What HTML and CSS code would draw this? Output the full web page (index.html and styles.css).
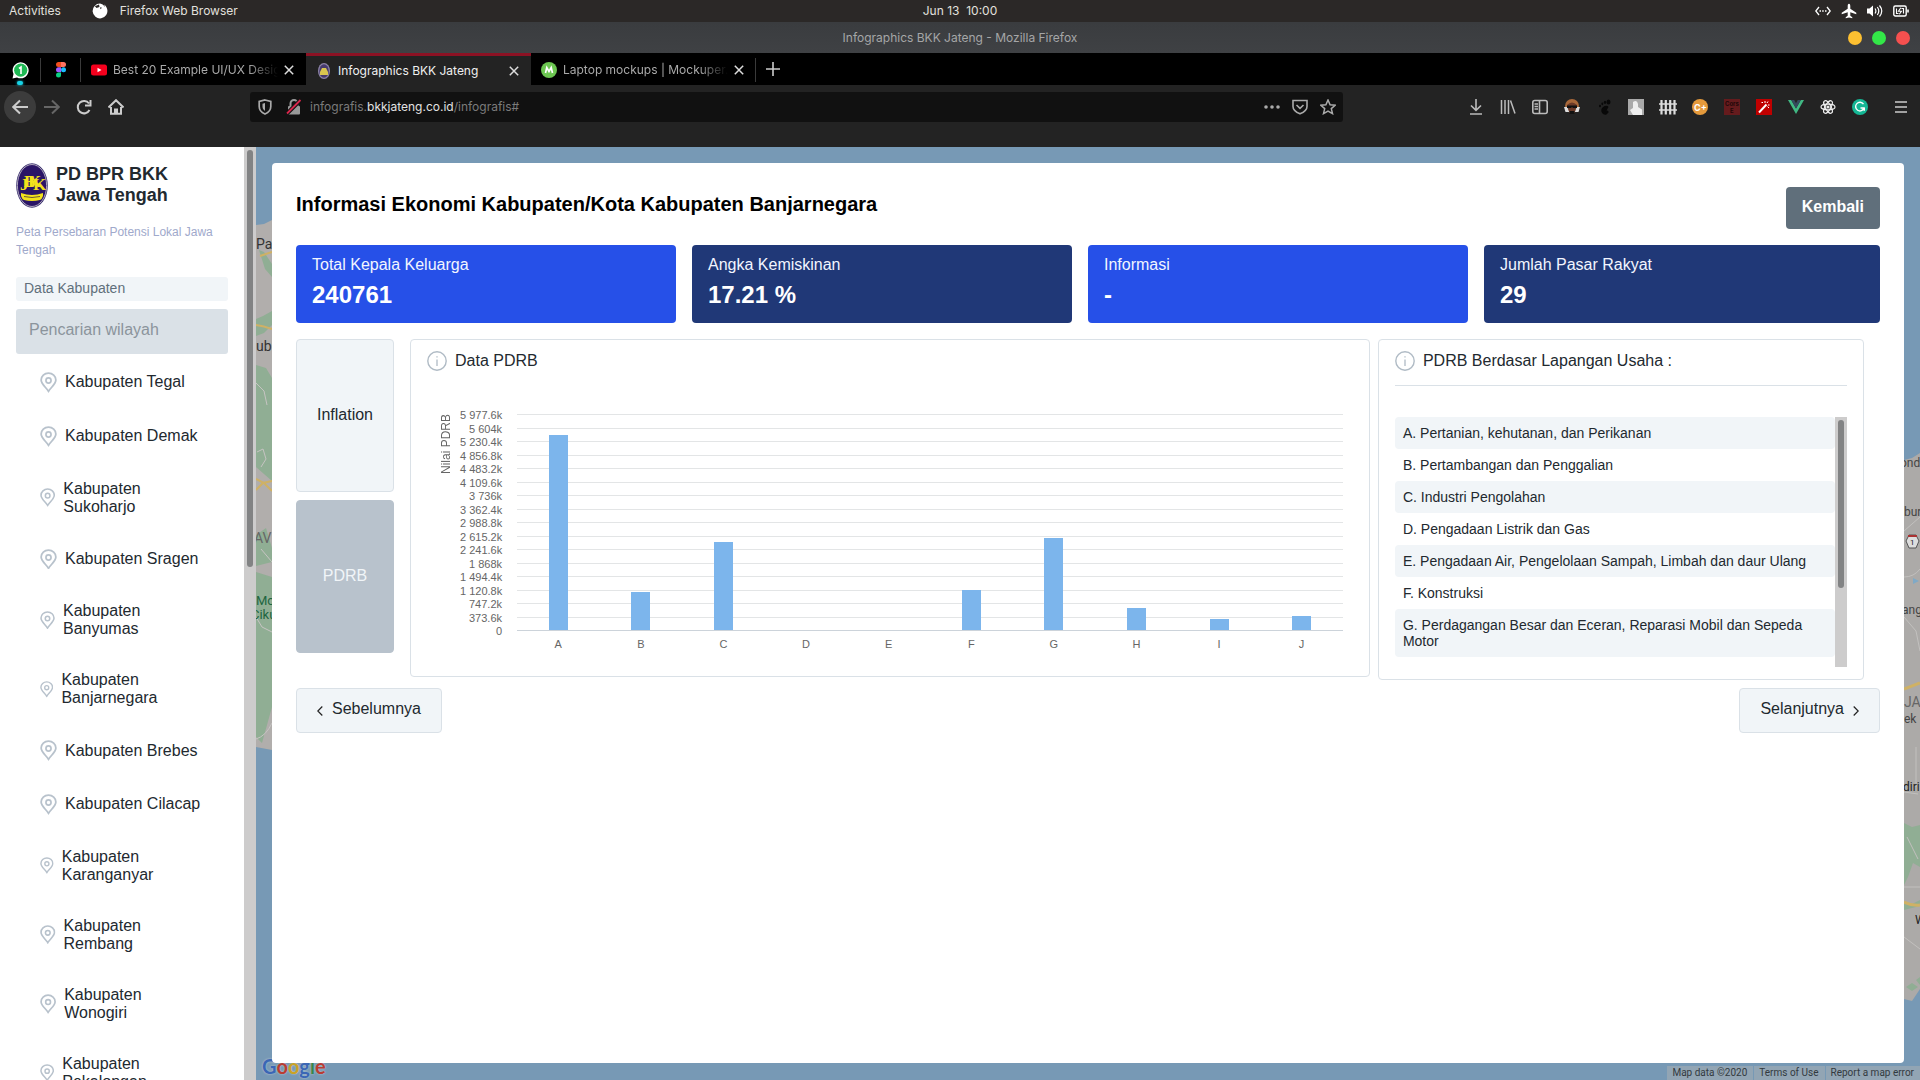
FILE: index.html
```html
<!DOCTYPE html>
<html lang="id">
<head>
<meta charset="utf-8">
<meta name="viewport" content="width=device-width, initial-scale=1">
<title>Infographics BKK Jateng</title>
<link rel="stylesheet" href="styles.css">
</head>
<body>
<svg class="defs" aria-hidden="true">
  <symbol id="pin" viewBox="0 0 18 22"><path d="M9 20.5C6.800 16.500 1.200 13 1.200 8.500a7.800 7.300 0 0 1 15.600 0C16.800 13 11.200 16.500 9 20.500z" fill="none" stroke="#b8c2cc" stroke-width="1.900"/><circle cx="9" cy="9" r="2.700" fill="none" stroke="#b8c2cc" stroke-width="1.800"/></symbol>
  <symbol id="info" viewBox="0 0 20 20"><circle cx="10" cy="10" r="9.200" fill="none" stroke="#b0bbc5" stroke-width="1.400"/><path d="M10 8.500v6.500M10 5.200v1.300" stroke="#b0bbc5" stroke-width="1.300"/></symbol>
  <symbol id="close" viewBox="0 0 10 10"><path d="M.8.8l8.400 8.400M9.200.8L.8 9.200" stroke="currentColor" stroke-width="1.500"/></symbol>
  <symbol id="logo" viewBox="0 0 32 45"><ellipse cx="16" cy="22.500" rx="15.800" ry="22.200" fill="#3b3170"/><ellipse cx="16" cy="22.500" rx="14.600" ry="21" fill="#2a1566" stroke="#bcb4c4" stroke-width=".9"/><text x="4 8 12 17" y="27 24 24 27" font-size="17" fill="#f2e21c" font-family="Liberation Serif, serif" font-weight="bold">JBKK</text><path d="M5 30q11 4 22 0v3q-1 3-3 4-8 2-16 0-2-1-3-4z" fill="#f2e21c"/><path d="M8 33.500q8 2 16 0" fill="none" stroke="#6b5a35"/></symbol>
</svg>

<header class="system">
  <button class="system__item" type="button">Activities</button>
  <button class="system__item" type="button">
    <svg width="16" height="16" viewBox="0 0 16 16"><path d="M8 .6a7.400 7.400 0 1 0 7.200 5.600C14.700 4.200 13.500 2.500 12 1.600c.7 1 .8 1.700.8 2.400C11.500 2 10 1 8 .6z" fill="#fff"/><path d="M1 1l2.500 2L7 1.500 7.500 4l-3 1zM8 4.200l2 .6-1.500 1.400z" fill="#2b2826"/></svg>
    Firefox Web Browser</button>
  <time class="system__clock">Jun 13&nbsp; 10:00</time>
  <div class="system__tray">
    <svg width="16" height="16" viewBox="0 0 16 16" fill="none" stroke="#fff" stroke-width="1.300"><path d="M4 4L.8 8 4 12M12 4l3.200 4L12 12M4.500 8h1.500M7.200 8h1.500M10 8h1.500"/></svg>
    <svg width="16" height="16" viewBox="0 0 16 16" fill="#fff"><path d="M8 .8c1 0 1.300 1.200 1.300 2.500v2.500l6 4v1.500l-6-2v3.500l2 1.500v1L8 14.500l-3.300.8v-1l2-1.500V9.300l-6 2V9.800l6-4V3.300C6.700 2 7 .8 8 .8z"/></svg>
    <svg width="16" height="16" viewBox="0 0 16 16"><path d="M0 5.500h2.500L6 2.500v11L2.500 10.500H0z" fill="#fff"/><path d="M8 5.500q1.800 2.500 0 5M10.300 4q3 4 0 8M12.500 2.500q4.500 5.500 0 11" fill="none" stroke="#fff" stroke-width="1.200"/></svg>
    <svg width="16" height="16" viewBox="0 0 16 16" fill="none" stroke="#fff"><rect x=".8" y="3" width="12.400" height="10" rx="1.500" stroke-width="1.400"/><path d="M15 6.500v3" stroke-width="1.600"/><path d="M3.500 5.500v5h2M10.500 10.500v-5h-2M7.800 4.800L5.500 8.200h3L6.300 11.300" stroke-width="1.100"/></svg>
  </div>
</header>

<div class="titlebar">
  <span>Infographics BKK Jateng - Mozilla Firefox</span>
  <div class="titlebar__buttons">
    <button class="dot dot--min" type="button" aria-label="Minimize"></button>
    <button class="dot dot--max" type="button" aria-label="Maximize"></button>
    <button class="dot dot--close" type="button" aria-label="Close"></button>
  </div>
</div>

<nav class="tabs" aria-label="Tabs">
  <a class="tab tab--pinned tab--notice" href="#" aria-label="WhatsApp">
    <svg width="17" height="17" viewBox="0 0 17 17"><path d="M.5 16.500l1-4.500A8 8 0 1 1 5 15.500z" fill="#fff"/><circle cx="8.700" cy="8.200" r="6.600" fill="#1fb954"/><path d="M7 6.500l2-1.500v7" fill="none" stroke="#fff" stroke-width="1.600"/></svg>
  </a>
  <a class="tab tab--pinned" href="#" aria-label="Figma">
    <svg width="12" height="16" viewBox="0 0 12 16"><path d="M3.500 0H6v5H3.500a2.500 2.500 0 0 1 0-5z" fill="#f24e1e"/><path d="M6 0h2.500a2.500 2.500 0 0 1 0 5H6z" fill="#ff7262"/><path d="M3.500 5.300H6v5H3.500a2.500 2.500 0 0 1 0-5z" fill="#a259ff"/><circle cx="8.500" cy="7.800" r="2.500" fill="#1abcfe"/><path d="M3.500 10.600H6v2.500a2.500 2.500 0 1 1-2.500-2.500z" fill="#0acf83"/></svg>
  </a>
  <a class="tab" href="#">
    <svg width="16" height="16" viewBox="0 0 16 16"><rect y="2.500" width="16" height="11" rx="2.500" fill="#f5001d"/><path d="M6.500 5.700v4.600l4-2.300z" fill="#fff"/></svg>
    <span class="tab__title tab__title--fade">Best 20 Example UI/UX Desig</span>
    <svg class="tab__close" width="10" height="10"><use href="#close"/></svg>
  </a>
  <a class="tab tab--active" href="#" aria-current="page">
    <svg width="12" height="16" viewBox="0 0 12 16"><ellipse cx="6" cy="8" rx="6" ry="8" fill="#8d84a8"/><ellipse cx="6" cy="8" rx="4.800" ry="6.800" fill="#463a6c"/><path d="M2 9l2-4h4l2 4v3H2z" fill="#d9c64f"/></svg>
    <span class="tab__title">Infographics BKK Jateng</span>
    <svg class="tab__close" width="10" height="10"><use href="#close"/></svg>
  </a>
  <a class="tab" href="#">
    <svg width="16" height="16" viewBox="0 0 16 16"><circle cx="8" cy="8" r="8" fill="#6cc651"/><path d="M4.500 11L5.800 5.500 8 9.500l2.200-4L11.500 11" fill="none" stroke="#fff" stroke-width="1.700"/></svg>
    <span class="tab__title tab__title--fade">Laptop mockups | Mockuper.r</span>
    <svg class="tab__close" width="10" height="10"><use href="#close"/></svg>
  </a>
  <button class="tabs__new" type="button" aria-label="New tab"><svg width="14" height="14" viewBox="0 0 14 14"><path d="M7 0v14M0 7h14" stroke="#ccc" stroke-width="1.600"/></svg></button>
</nav>

<div class="toolbar">
  <div class="toolbar__nav">
    <button class="nav-btn nav-btn--back" type="button" aria-label="Back"><svg width="16" height="16" viewBox="0 0 16 16"><path d="M16 8H1M8 1.500L1.300 8 8 14.500"/></svg></button>
    <button class="nav-btn nav-btn--off" type="button" aria-label="Forward"><svg width="16" height="16" viewBox="0 0 16 16"><path d="M0 8h15M8 1.500L14.700 8 8 14.500"/></svg></button>
    <button class="nav-btn" type="button" aria-label="Reload"><svg width="16" height="16" viewBox="0 0 16 16"><path d="M13.500 11A6.200 6.200 0 1 1 13 4.500M14.500 1v5.500H9"/></svg></button>
    <button class="nav-btn" type="button" aria-label="Home"><svg width="16" height="16" viewBox="0 0 16 16"><path d="M.5 8.500L8 1.200l7.500 7.300M3 8v6.800h10V8M7 14.500v-4h2v4"/></svg></button>
  </div>
  <div class="urlbar">
    <svg width="14" height="16" viewBox="0 0 14 16" fill="none" stroke="#aaa" stroke-width="1.700"><path d="M7 1l5.800 1.500v5C12.800 11 10.500 13.500 7 15 3.500 13.500 1.200 11 1.200 7.500v-5z"/><path d="M7 4v8q-2.500-1.500-2.500-4V4.700z" fill="#aaa" stroke="none"/></svg>
    <svg width="16" height="16" viewBox="0 0 16 16"><path d="M4.500 7V4.500a3.500 3.500 0 0 1 7 0V7" fill="none" stroke="#999" stroke-width="2"/><rect x="2" y="7" width="12" height="8.500" rx="1" fill="#999"/><path d="M1 14.500L14.500 1" stroke="#111" stroke-width="4"/><path d="M1 14.500L14.500 1" stroke="#d7264b" stroke-width="1.800"/></svg>
    <a class="urlbar__text" href="#">infografis.<b>bkkjateng.co.id</b>/infografis#</a>
    <svg width="16" height="16" viewBox="0 0 16 16" fill="#aaa"><circle cx="2" cy="8" r="1.800"/><circle cx="8" cy="8" r="1.800"/><circle cx="14" cy="8" r="1.800"/></svg>
    <svg width="16" height="16" viewBox="0 0 16 16" fill="none" stroke="#aaa" stroke-width="1.600"><path d="M1 1.500h14v6q0 4.500-7 7.300-7-2.800-7-7.300z"/><path d="M4.500 6L8 9.300 11.500 6"/></svg>
    <svg width="16" height="16" viewBox="0 0 16 16" fill="none" stroke="#aaa" stroke-width="1.500"><path d="M8 1l2.100 4.700 5.100.5-3.900 3.400 1.200 5L8 12l-4.500 2.600 1.200-5L.8 6.200l5.100-.5z"/></svg>
  </div>
  <div class="toolbar__ext">
    <svg width="16" height="16" viewBox="0 0 16 16" fill="none" stroke="#bbb" stroke-width="1.600"><path d="M8 0v11M3 6.500L8 11.300l5-4.800M2 15h12"/></svg>
    <svg width="16" height="16" viewBox="0 0 16 16" fill="none" stroke="#bbb" stroke-width="1.500"><path d="M1.500 1v14M5 1v14M8.500 1v14M10.500 1.500l4.500 13"/></svg>
    <svg width="16" height="16" viewBox="0 0 16 16" fill="none" stroke="#bbb" stroke-width="1.600"><rect x=".8" y="1.500" width="14.400" height="13" rx="2"/><path d="M7.500 2v12M2.500 5h3.500M2.500 7.500h3.500M2.500 10h3.500"/></svg>
    <svg width="16" height="16" viewBox="0 0 16 16"><circle cx="8" cy="7" r="7" fill="#a8683a"/><path d="M0 8h16l-1.500 5h-13z" fill="#ddd"/><path d="M3 6q5-5 10 0l-1 4q-1 4-4 5-3-1-4-5z" fill="#6b3a28"/><path d="M3 6.500h10v2.500H9L8 8 7 9H3zM5.500 12h5v3h-5z" fill="#111"/></svg>
    <svg width="16" height="16" viewBox="0 0 16 16" fill="#080808"><ellipse cx="12.500" cy="3" rx="2" ry="2.600"/><ellipse cx="9" cy="3.300" rx="1.200" ry="1.600"/><ellipse cx="6.300" cy="4.800" rx="1" ry="1.400"/><ellipse cx="4" cy="7" rx="1" ry="1.300"/><path d="M12.500 8q-1-2-4-1-4 2-3 6 1.500 3.500 5 2.500l2-2q.5-2-2-2z"/></svg>
    <svg width="16" height="16" viewBox="0 0 16 16"><rect width="16" height="16" fill="#a9a9a9"/><path d="M5 3q4-3 5 2v3l4 2.500V16H5l-3-5 3-2z" fill="#eee"/></svg>
    <svg width="18" height="16" viewBox="0 0 18 16" fill="none" stroke="#ddd"><path d="M2.500 1v14.500M6.800 1v14.500M11.200 1v14.500M15.500 1v14.500" stroke-width="2.200"/><path d="M0 5h18M0 11h18" stroke-width="1.400"/></svg>
    <svg width="16" height="16" viewBox="0 0 16 16"><circle cx="8" cy="8" r="8" fill="#e59a3c"/><text x="2" y="11.500" font-size="9" font-weight="bold" fill="#fff" font-family="Inter, sans-serif">C+</text></svg>
    <svg width="16" height="16" viewBox="0 0 16 16"><rect width="16" height="16" fill="#651b1d"/><g fill="#1e0809" font-family="Inter, sans-serif" font-size="6" font-weight="bold"><text x="1" y="7">Cors</text><text x="6" y="14">E</text></g></svg>
    <svg width="16" height="16" viewBox="0 0 16 16"><rect width="16" height="16" fill="#c00000"/><path d="M3 13.500L10.500 5.500" stroke="#fff" stroke-width="2"/><path d="M9 2v2M12 2.500l-1 1.500M13.500 6h-1.500M13 9l-1.500-1.500M5.500 3.500h1.500" stroke="#fff"/></svg>
    <svg width="16" height="16" viewBox="0 0 16 16"><path d="M0 1h3.200L8 9.500 12.800 1H16L8 15z" fill="#41b883"/><path d="M3.200 1h3L8 4.200 9.800 1h3L8 9.500z" fill="#35495e"/></svg>
    <svg width="16" height="16" viewBox="0 0 16 16" fill="none" stroke="#eee" stroke-width="1.200"><ellipse cx="8" cy="8" rx="7" ry="2.800"/><ellipse cx="8" cy="8" rx="7" ry="2.800" transform="rotate(60 8 8)"/><ellipse cx="8" cy="8" rx="7" ry="2.800" transform="rotate(120 8 8)"/><circle cx="8" cy="8" r="1" fill="#eee"/></svg>
    <svg width="16" height="16" viewBox="0 0 16 16"><circle cx="8" cy="8" r="8" fill="#15b795"/><path d="M11.500 5.200A4.300 4.300 0 1 0 12 9H8.500M12.300 9v2.800" fill="none" stroke="#fff" stroke-width="1.400"/></svg>
    <button class="menu-btn" type="button" aria-label="Menu"><svg width="12" height="14" viewBox="0 0 12 14"><path d="M0 2h12M0 7h12M0 12h12" stroke="#ccc" stroke-width="1.700"/></svg></button>
  </div>
</div>

<div class="app">
  <aside class="sidebar">
    <div class="sidebar__body">
      <div class="brand">
        <svg width="32" height="45"><use href="#logo"/></svg>
        <h1 class="brand__name">PD BPR BKK<br>Jawa Tengah</h1>
      </div>
      <p class="sidebar__note">Peta Persebaran Potensi Lokal Jawa Tengah</p>
      <label class="sidebar__label" for="search">Data Kabupaten</label>
      <input class="sidebar__search" id="search" type="text" placeholder="Pencarian wilayah">
      <ul class="regions">
        <li><a class="region" href="#"><svg class="region__pin" viewBox="0 0 18 22"><use href="#pin"/></svg><span>Kabupaten Tegal</span></a></li>
        <li><a class="region" href="#"><svg class="region__pin" viewBox="0 0 18 22"><use href="#pin"/></svg><span>Kabupaten Demak</span></a></li>
        <li><a class="region" href="#"><svg class="region__pin" viewBox="0 0 18 22"><use href="#pin"/></svg><span>Kabupaten Sukoharjo</span></a></li>
        <li><a class="region" href="#"><svg class="region__pin" viewBox="0 0 18 22"><use href="#pin"/></svg><span>Kabupaten Sragen</span></a></li>
        <li><a class="region" href="#"><svg class="region__pin" viewBox="0 0 18 22"><use href="#pin"/></svg><span>Kabupaten Banyumas</span></a></li>
        <li><a class="region" href="#"><svg class="region__pin" viewBox="0 0 18 22"><use href="#pin"/></svg><span>Kabupaten Banjarnegara</span></a></li>
        <li><a class="region" href="#"><svg class="region__pin" viewBox="0 0 18 22"><use href="#pin"/></svg><span>Kabupaten Brebes</span></a></li>
        <li><a class="region" href="#"><svg class="region__pin" viewBox="0 0 18 22"><use href="#pin"/></svg><span>Kabupaten Cilacap</span></a></li>
        <li><a class="region" href="#"><svg class="region__pin" viewBox="0 0 18 22"><use href="#pin"/></svg><span>Kabupaten Karanganyar</span></a></li>
        <li><a class="region" href="#"><svg class="region__pin" viewBox="0 0 18 22"><use href="#pin"/></svg><span>Kabupaten Rembang</span></a></li>
        <li><a class="region" href="#"><svg class="region__pin" viewBox="0 0 18 22"><use href="#pin"/></svg><span>Kabupaten Wonogiri</span></a></li>
        <li><a class="region" href="#"><svg class="region__pin" viewBox="0 0 18 22"><use href="#pin"/></svg><span>Kabupaten Pekalongan</span></a></li>
      </ul>
    </div>
    <div class="scrollbar"><div class="scrollbar__thumb" style="height: 45%"></div></div>
  </aside>

  <main class="map">
    <svg class="map__edge map__edge--left" width="16" height="933" viewBox="0 0 16 933" font-family="Roboto, sans-serif">
      <path d="M0 78L8 77 16 73V603L0 600z" fill="#b1aeac"/>
      <g fill="#90ae94"><path d="M3 103l5 2 8 12v13l-7-8zM0 172l7-3 9-5v14l-8 8-8 3zM0 218l10 3 6 10v42l-16 18zM0 277q10-4 16-5v62l-16-14zM0 388l10-7 6 20v14l-16 4zM0 425l16 5v130L6 596 0 590z"/></g>
      <g fill="none" stroke="#c6c4c2"><path d="M0 236l8 8 3 14M1 305l6-3 3 10-5 8M0 470l6 10 10 5M0 592q10-3 16-16M5 402l11 13"/></g>
      <g fill="none" stroke="#cfb165" stroke-width="2"><path d="M4 109l12-4M0 178q8 1 16 4M0 343l7-7 9-2M0 332l8 4 8 8"/></g>
      <g font-size="14" fill="#333"><text x="0" y="102">Pa</text><text x="0" y="204">ub</text></g>
      <text x="-2" y="396" font-size="14" fill="#666">AV</text>
      <g font-size="13" fill="#20653f"><text x="0" y="458">Mc</text><text x="-5" y="472">Ciku</text></g>
    </svg>
    <svg class="map__edge map__edge--right" width="16" height="933" viewBox="0 0 16 933" font-family="Roboto, sans-serif">
      <path d="M0 313l8-2 8-5v536l-8 12-8-2z" fill="#acaaa8"/>
      <g fill="#90ae94"><path d="M0 676l8 4 8-2v42l-7-4-5 14-4 8zM2 840l6-4 6 4-6 4zM12 833l4-3v8zM0 755l8 2 8-4v6l-16 4z"/></g>
      <g fill="none" stroke="#c2c0be"><path d="M0 384l16-14M0 430q10 0 16-8M0 470l12 14 4 20M0 645l14 2M12 600v40M0 740h16M3 690l11 22M0 790l16 12"/></g>
      <g fill="none" stroke="#cfb165" stroke-width="3"><path d="M0 542l16-6M0 755q8 4 16 3"/></g>
      <path d="M9 431l6 3-6 3z" fill="#7fa9c6"/>
      <g font-size="12" fill="#444"><text x="-4" y="320">ond</text><text x="0" y="369">bur</text><text x="-2" y="467">ang</text><text x="0" y="576">ek</text></g>
      <path d="M2 394l3-6h7l3 6-3 7H5z" fill="#ddd" stroke="#555"/><path d="M4 389h9" stroke="#a33" stroke-width="2"/><text x="6" y="398" font-size="8" fill="#222">1</text>
      <text x="0" y="560" font-size="14" fill="#666">JA</text>
      <text x="-1" y="644" font-size="12" fill="#222">diri</text><text x="11" y="777" font-size="12" fill="#222">W</text>
    </svg>
    <span class="map__google" aria-label="Google"><i class="g-b">G</i><i class="g-r">o</i><i class="g-y">o</i><i class="g-b">g</i><i class="g-g">l</i><i class="g-r">e</i></span>

    <section class="panel">
      <div class="panel__head">
        <h2 class="panel__title">Informasi Ekonomi Kabupaten/Kota Kabupaten Banjarnegara</h2>
        <button class="btn btn--back" type="button">Kembali</button>
      </div>

      <div class="stats">
        <div class="stat"><div class="stat__label">Total Kepala Keluarga</div><div class="stat__value">240761</div></div>
        <div class="stat stat--dark"><div class="stat__label">Angka Kemiskinan</div><div class="stat__value">17.21 %</div></div>
        <div class="stat"><div class="stat__label">Informasi</div><div class="stat__value">-</div></div>
        <div class="stat stat--dark"><div class="stat__label">Jumlah Pasar Rakyat</div><div class="stat__value">29</div></div>
      </div>

      <div class="detail">
        <div class="switch">
          <button class="switch__item" type="button">Inflation</button>
          <button class="switch__item switch__item--active" type="button">PDRB</button>
        </div>

        <section class="card card--chart">
          <h3 class="card__title"><svg width="20" height="20"><use href="#info"/></svg>Data PDRB</h3>
          <div class="chart">
            <div class="chart__axis-title">Nilai PDRB</div>
            <div class="chart__y">
              <span>5 977.6k</span><span>5 604k</span><span>5 230.4k</span><span>4 856.8k</span><span>4 483.2k</span><span>4 109.6k</span><span>3 736k</span><span>3 362.4k</span><span>2 988.8k</span><span>2 615.2k</span><span>2 241.6k</span><span>1 868k</span><span>1 494.4k</span><span>1 120.8k</span><span>747.2k</span><span>373.6k</span><span>0</span>
            </div>
            <div class="chart__plot">
              <div class="chart__grid"><i></i><i></i><i></i><i></i><i></i><i></i><i></i><i></i><i></i><i></i><i></i><i></i><i></i><i></i><i></i><i></i><i></i></div>
              <div class="chart__bars">
                <div class="bar" style="height: 195px"></div>
                <div class="bar" style="height: 38px"></div>
                <div class="bar" style="height: 88px"></div>
                <div class="bar" style="height: 0"></div>
                <div class="bar" style="height: 0"></div>
                <div class="bar" style="height: 40px"></div>
                <div class="bar" style="height: 92px"></div>
                <div class="bar" style="height: 22px"></div>
                <div class="bar" style="height: 11px"></div>
                <div class="bar" style="height: 14px"></div>
              </div>
            </div>
            <div class="chart__x"><span>A</span><span>B</span><span>C</span><span>D</span><span>E</span><span>F</span><span>G</span><span>H</span><span>I</span><span>J</span></div>
          </div>
        </section>

        <section class="card card--legend">
          <h3 class="card__title card__title--ruled"><svg width="20" height="20"><use href="#info"/></svg>PDRB Berdasar Lapangan Usaha :</h3>
          <div class="legend">
            <ul class="legend__list">
              <li>A. Pertanian, kehutanan, dan Perikanan</li>
              <li>B. Pertambangan dan Penggalian</li>
              <li>C. Industri Pengolahan</li>
              <li>D. Pengadaan Listrik dan Gas</li>
              <li>E. Pengadaan Air, Pengelolaan Sampah, Limbah dan daur Ulang</li>
              <li>F. Konstruksi</li>
              <li>G. Perdagangan Besar dan Eceran, Reparasi Mobil dan Sepeda Motor</li>
            </ul>
            <div class="scrollbar"><div class="scrollbar__thumb" style="height: 69%"></div></div>
          </div>
        </section>
      </div>

      <div class="pager">
        <button class="btn btn--page" type="button"><svg width="6" height="10" viewBox="0 0 6 10"><path d="M5.300.5L.8 5l4.500 4.500" fill="none" stroke="#222" stroke-width="1.200"/></svg>Sebelumnya</button>
        <button class="btn btn--page" type="button">Selanjutnya<svg width="6" height="10" viewBox="0 0 6 10"><path d="M.7.500L5.200 5 .7 9.500" fill="none" stroke="#222" stroke-width="1.200"/></svg></button>
      </div>
    </section>

    <footer class="map__terms"><span>Map data ©2020</span><a href="#">Terms of Use</a><a href="#">Report a map error</a></footer>
  </main>
</div>
</body>
</html>
```
FILE: styles.css
```css
*, *::before, *::after { box-sizing: border-box; }

body {
  margin: 0;
  height: 100vh;
  display: flex;
  flex-direction: column;
  overflow: hidden;
  background: #232323;
  color: #22292f;
  font-family: "Liberation Sans", Arial, sans-serif;
  font-size: 16px;
  line-height: 18px;
}

h1, h2, h3, p, ul { margin: 0; padding: 0; }
ul { list-style: none; }
a { color: inherit; text-decoration: none; }
svg { display: block; flex: none; }
button, input { font: inherit; color: inherit; border: 0; padding: 0; background: none; }
.defs { position: absolute; width: 0; height: 0; }

/* Desktop bar */
.system, .titlebar, .tabs, .toolbar {
  flex: none;
  font-family: Inter, sans-serif;
  font-size: 12px;
  line-height: 16px;
}
.system {
  position: relative;
  display: flex;
  align-items: center;
  gap: 31px;
  height: 22px;
  padding: 0 11px 0 9px;
  background: #2b2827;
  color: #e2e0de;
}
.system__item { display: flex; align-items: center; gap: 12px; }
.system__clock { position: absolute; left: 50%; transform: translateX(-50%); }
.system__tray { display: flex; gap: 10px; margin-left: auto; }

/* Window title */
.titlebar {
  position: relative;
  display: flex;
  align-items: center;
  justify-content: center;
  height: 31px;
  background: linear-gradient(#3a3c3f, #3f4144);
  color: #a5a6a7;
}
.titlebar__buttons { position: absolute; right: 10px; display: flex; gap: 10px; }
.dot { width: 14px; height: 14px; border-radius: 50%; }
.dot--min { background: #fdc031; }
.dot--max { background: #33e748; }
.dot--close { background: #f5504f; }

/* Browser tabs */
.tabs { display: flex; height: 32px; background: #000; color: #a9a9a9; }
.tab {
  position: relative;
  display: flex;
  align-items: center;
  gap: 6px;
  width: 225px;
  padding: 2px 12px 0 10px;
}
.tab--pinned { width: 41px; justify-content: center; padding: 2px 0 0; }
.tab--pinned + .tab--pinned { width: 40px; }
.tab--pinned::after, .tab:nth-last-child(2)::after {
  content: "";
  position: absolute;
  right: 0;
  top: 5px;
  bottom: 3px;
  width: 1px;
  background: #3a3a3a;
}
.tab--notice::before {
  content: "";
  position: absolute;
  bottom: 0;
  left: 17px;
  width: 6px;
  height: 4px;
  border-radius: 3px;
  background: #17d3e6;
  box-shadow: 0 0 3px #17d3e6;
}
.tab--active { gap: 8px; background: #232323; color: #f0f0f0; border-top: 3px solid #8c1224; padding: 0 12px; }
.tab__title { flex: 1; overflow: hidden; white-space: nowrap; }
.tab__title--fade { -webkit-mask-image: linear-gradient(90deg, #000 82%, transparent); mask-image: linear-gradient(90deg, #000 82%, transparent); }
.tab__close { color: #ddd; }
.tabs__new { padding: 0 10px; }

/* Navigation */
.toolbar { display: flex; align-items: center; height: 62px; padding: 0 13px 19px 4px; }
.toolbar__nav { display: flex; width: 246px; align-items: center; }
.nav-btn { width: 32px; height: 32px; display: grid; place-items: center; border-radius: 50%; }
.nav-btn svg { fill: none; stroke: #ccc; stroke-width: 2; }
.nav-btn--back { background: #3c3c3c; }
.nav-btn--off svg { stroke: #666; }
.urlbar {
  flex: 1;
  display: flex;
  align-items: center;
  gap: 12px;
  height: 30px;
  padding: 0 7px 0 8px;
  border-radius: 3px;
  background: #111;
  color: #7b7b7b;
}
.urlbar svg:nth-child(2) { margin: 0 -4px 0 2px; }
.urlbar__text { flex: 1; }
.urlbar__text b { font-weight: 400; color: #e2e2e2; }
.toolbar__ext { display: flex; align-items: center; gap: 16px; margin-left: 125px; }
.toolbar__ext svg:nth-child(7) { margin: 0 -1px; }
.menu-btn { padding-left: 11px; }

/* Application */
.app { flex: 1; min-height: 0; display: flex; }
.sidebar { flex: none; width: 256px; display: flex; background: #fff; }
.sidebar__body { flex: 1; overflow: hidden; padding: 16px; }
.scrollbar { flex: none; width: 12px; padding: 3px; background: #cdcccc; }
.scrollbar__thumb { border-radius: 3px; background: #828384; }
.brand { display: flex; gap: 8px; }
.brand__name { padding-top: 1px; font-size: 18px; line-height: 21px; }
.sidebar__note { margin-top: 15px; font-size: 12px; color: #a0a9cb; }
.sidebar__label {
  display: block;
  height: 24px;
  margin-top: 18px;
  padding: 2px 8px;
  border-radius: 3px;
  background: #f1f5f8;
  color: #606f7b;
  font-size: 14px;
}
.sidebar__search {
  display: block;
  width: 100%;
  height: 45px;
  margin-top: 8px;
  padding: 0 13px 4px;
  border-radius: 3px;
  background: #dae1e7;
}
.sidebar__search::placeholder { color: #8b949c; opacity: 1; }
.regions { margin-top: 2px; padding: 0 26px 0 24px; }
.region { display: flex; align-items: center; gap: 8px; padding: 16px; padding: 16px 0 17px; }
.region__pin { flex: 0 1 17px; min-width: 0; width: 17px; height: auto; }

/* Map */
.map { position: relative; flex: 1; min-width: 0; display: flex; padding: 16px 16px 17px; background: #7799b5; overflow: hidden; }
.map__edge { position: absolute; top: 0; }
.map__edge--left { left: 0; }
.map__edge--right { right: 0; }
.map__google {
  position: absolute;
  left: 6px;
  bottom: 2px;
  font: 700 20px/24px Lato, sans-serif;
  text-shadow: 0 0 2px #c8d2da;
}
.map__google i { font-style: normal; }
.g-b { color: #3b67b5; }
.g-r { color: #b93c33; }
.g-y { color: #c9a227; }
.g-g { color: #37864b; }
.map__terms {
  position: absolute;
  right: 0;
  bottom: 0;
  display: flex;
  height: 14px;
  background: #92a5b4;
  color: #333a40;
  font: 10px/14px Roboto, sans-serif;
}
.map__terms > * { padding: 0 6px 0 5px; }
.map__terms > * + * { border-left: 1px solid #7799b5; }

/* Panel */
.panel { position: relative; flex: 1; min-width: 0; padding: 24px; border-radius: 4px; background: #fff; }
.panel__head { display: flex; justify-content: space-between; }
.panel__title { color: #000; font-size: 20px; line-height: 34px; }
.btn { border-radius: 4px; }
.btn--back { padding: 11px 16px 13px; background: #606f7b; color: #fff; font-weight: 700; }

.stats { display: grid; grid-template-columns: repeat(4, 1fr); margin-top: 16px; }
.stat { margin-right: 16px; padding: 10px 16px 13px; border-radius: 4px; background: #2650e8; color: #f2f5ff; }
.stat:last-child { margin-right: 0; }
.stat--dark { background: #203877; }
.stat__label { line-height: 20px; }
.stat__value { margin-top: 5px; font-size: 24px; line-height: 30px; font-weight: 700; color: #fff; }

.detail { display: flex; align-items: flex-start; margin-top: 16px; padding-right: 16px; }
.switch { flex: none; width: 98px; display: grid; gap: 8px; margin-right: 16px; }
.switch__item { height: 153px; padding-bottom: 2px; border: 1px solid #dae1e7; border-radius: 4px; background: #f1f5f8; }
.switch__item--active { border-color: #b8c2cc; background: #b8c2cc; color: #f1f5f8; }
.card { padding: 11px 16px; border: 1px solid #dae1e7; border-radius: 4px; }
.card--chart { flex: 1; min-width: 0; height: 338px; margin-right: 8px; }
.card--legend { flex: none; width: 31%; height: 341px; }
.card__title { display: flex; gap: 8px; font-size: 16px; line-height: 20px; font-weight: 400; }
.card__title--ruled { padding-bottom: 16px; border-bottom: 1px solid #dae1e7; }
.card__title--ruled { padding-bottom: 14px; }

.chart {
  display: grid;
  grid-template-columns: 26px 42px 1fr;
  column-gap: 7px;
  margin-top: 36px;
  padding-right: 10px;
  color: #666;
  font-size: 11px;
  line-height: 13px;
}
.chart__axis-title { writing-mode: vertical-rl; transform: rotate(180deg); justify-self: end; align-self: start; margin-top: 7px; font-size: 12px; }
.chart__y { display: flex; flex-direction: column; justify-content: space-between; height: 229px; margin-top: 2px; text-align: right; white-space: nowrap; }
.chart__plot { position: relative; height: 217px; margin: 7px 0 0 8px; }
.chart__grid { display: flex; flex-direction: column; justify-content: space-between; height: 100%; }
.chart__grid i { height: 1px; background: #e3e5e6; }
.chart__grid i:last-child { background: #ccd3da; }
.chart__bars { position: absolute; inset: 0 0 1px; display: grid; grid-template-columns: repeat(10, 1fr); align-items: end; justify-items: center; }
.bar { width: 19px; background: #7cb5ec; }
.chart__x { grid-column: 3; display: grid; grid-template-columns: repeat(10, 1fr); margin-left: 8px; text-align: center; }

.legend { display: flex; height: 250px; margin-top: 31px; }
.legend__list { flex: 1; overflow: hidden; font-size: 14px; line-height: 16px; }
.legend__list li { padding: 8px; border-radius: 4px; }
.legend__list li:nth-child(odd) { background: #f1f5f8; }

.pager { display: flex; justify-content: space-between; margin-top: 8px; }
.btn--page { display: flex; align-items: center; gap: 9px; height: 45px; padding: 0 20px 4px; border: 1px solid #dae1e7; background: #f1f5f8; }
.btn--page svg { margin-top: 4px; }
```
